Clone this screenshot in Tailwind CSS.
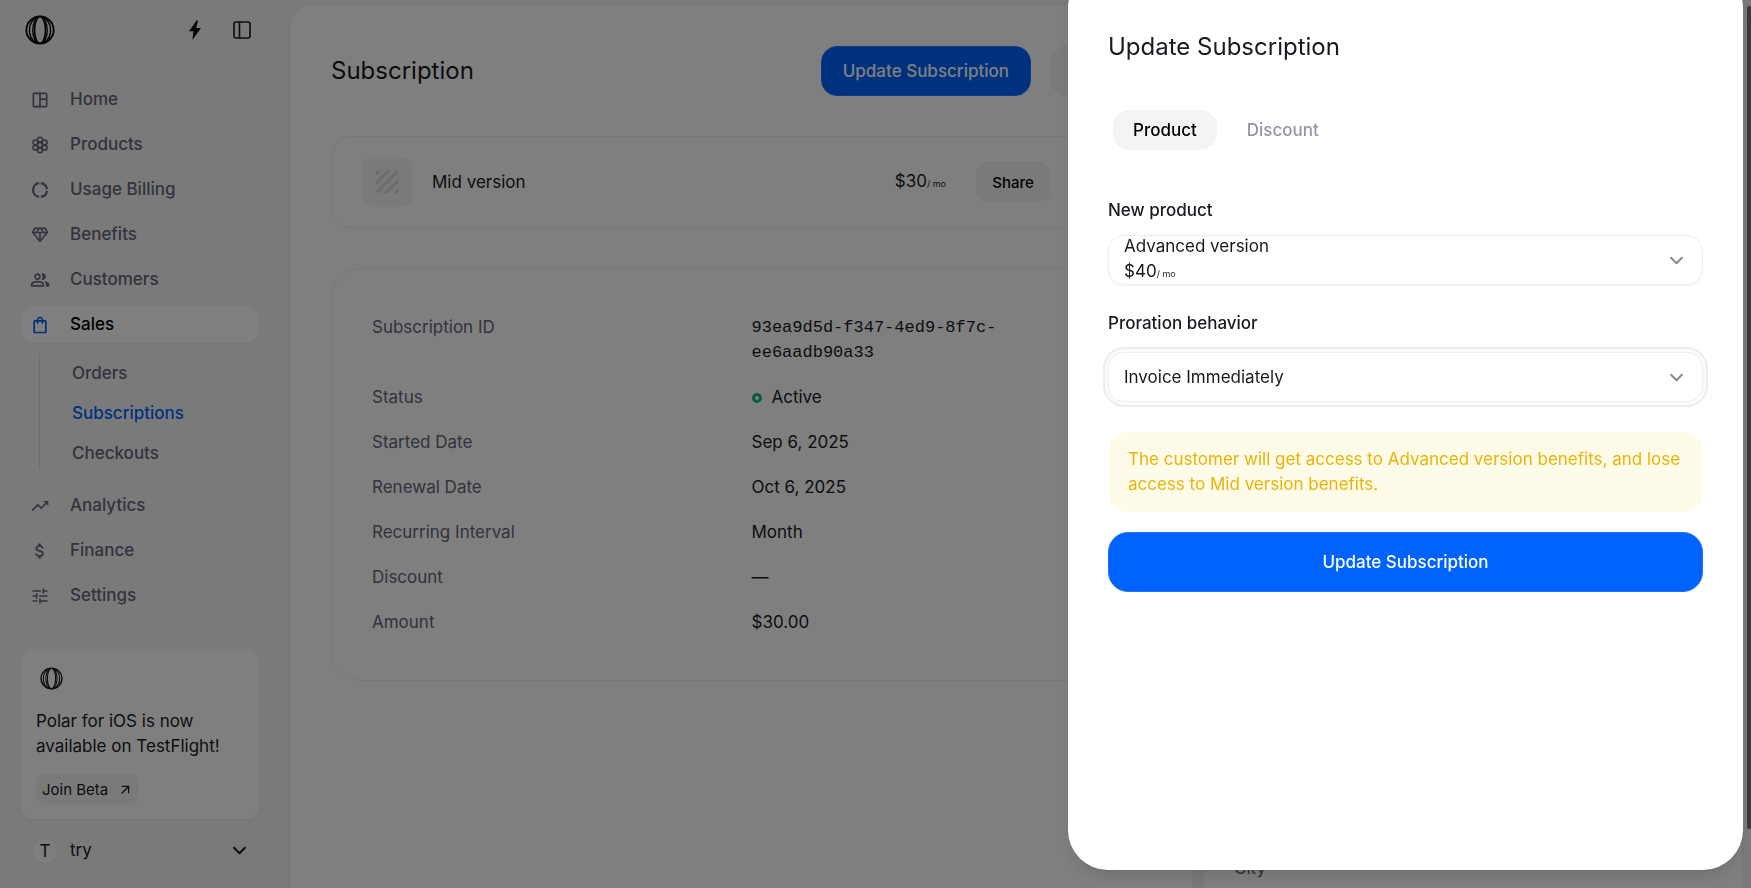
<!DOCTYPE html>
<html lang="en">
<head>
<meta charset="utf-8">
<meta name="viewport" content="width=device-width, initial-scale=1">
<title>Subscription</title>
<script src="https://cdn.jsdelivr.net/npm/@tailwindcss/browser@4"></script>
</head>
<body class="flex h-screen overflow-hidden bg-[#f5f5f5] font-['Inter',sans-serif] text-[17px] leading-[25px] text-[#181a1f]">
<svg class="hidden" aria-hidden="true">
  <symbol id="logo" viewBox="0 0 30 30">
    <g fill="none" stroke="currentColor">
      <circle cx="15" cy="15" r="13.6" stroke-width="1.8"/>
      <ellipse cx="15" cy="15" rx="5.4" ry="13.4" stroke-width="1.5"/>
      <path d="M12.500 1.700C2 7 2 22 11 27.700M14 1.600C6 6 5.500 24 14 28.400M17.500 1.700C28 7 28 22 19 27.700M16 1.600C24 6 24.500 24 16 28.400" stroke-width="1.4"/>
    </g>
  </symbol>
  <symbol id="chevron" viewBox="0 0 12 12"><path d="M1 3.500 6 8.500 11 3.500" fill="none" stroke="currentColor" stroke-width="1.8" stroke-linecap="round" stroke-linejoin="round"/></symbol>
</svg>

<aside class="flex h-full w-[290px] shrink-0 flex-col pr-[31px] pb-4 pl-[21px]">
  <div class="flex h-[59px] items-center">
    <a href="#" aria-label="Polar" class="ml-[4px] block text-black"><svg class="size-[30px]"><use href="#logo"/></svg></a>
    <div class="mr-2 ml-auto flex items-center gap-7">
      <button type="button" aria-label="Quick actions" class="text-black"><svg class="size-5" viewBox="0 0 20 20" fill="currentColor"><path d="M11.800 .2 4 11.300h4.400L7.500 19.800 16 8h-4.800L13 .5z"/></svg></button>
      <button type="button" aria-label="Toggle sidebar"><svg class="size-[18px]" viewBox="0 0 18 18" fill="none" stroke="currentColor" stroke-width="1.6"><rect x="1" y="1" width="16" height="16" rx="2"/><path d="M6.500 1v16"/></svg></button>
    </div>
  </div>

  <nav class="mt-[22px] flex flex-col gap-2 font-medium text-[#64667a]">
    <a href="#" class="flex h-[37px] items-center gap-5 px-[9px]"><svg class="size-5" viewBox="0 0 24 24" fill="currentColor"><path d="M19 3H5c-1.1 0-2 .9-2 2v14c0 1.1.9 2 2 2h14c1.1 0 2-.9 2-2V5c0-1.1-.9-2-2-2zM5 19V5h6v14H5zm14 0h-6v-7h6v7zm0-9h-6V5h6v5z"/></svg>Home</a>
    <a href="#" class="flex h-[37px] items-center gap-5 px-[9px]"><svg class="size-5" viewBox="0 0 24 24" fill="none" stroke="currentColor" stroke-width="1.8"><circle cx="12" cy="12" r="2.900"/><circle cx="12" cy="5.600" r="2.900"/><circle cx="12" cy="18.400" r="2.900"/><circle cx="6.400" cy="8.800" r="2.900"/><circle cx="6.400" cy="15.200" r="2.900"/><circle cx="17.600" cy="8.800" r="2.900"/><circle cx="17.600" cy="15.200" r="2.900"/></svg>Products</a>
    <a href="#" class="flex h-[37px] items-center gap-5 px-[9px]"><svg class="size-5" viewBox="0 0 24 24" fill="none" stroke="currentColor" stroke-width="2.700"><path d="M11 3.700C6.700 4.200 3.700 7.800 3.700 12s3 7.800 7.300 8.300M13 3.700c4 .5 6.900 3.500 7.400 7.300M20.400 13c-.5 3.800-3.400 6.800-7.400 7.300"/></svg>Usage Billing</a>
    <a href="#" class="flex h-[37px] items-center gap-5 px-[9px]"><svg class="size-5" viewBox="0 0 24 24" fill="currentColor"><path d="M19 3H5L2 9l10 12L22 9l-3-6zM9.620 8l1.500-3h1.760l1.500 3H9.620zM11 10v6.680L5.440 10H11zm2 0h5.560L13 16.680V10zm6.260-2h-2.650l-1.500-3h2.650l1.500 3zM6.240 5h2.650l-1.500 3H4.740l1.500-3z"/></svg>Benefits</a>
    <a href="#" class="flex h-[37px] items-center gap-5 px-[9px]"><svg class="size-5" viewBox="0 0 24 24" fill="currentColor"><path d="M16.670 13.130C18.040 14.060 19 15.320 19 17v3h4v-3c0-2.180-3.570-3.470-6.330-3.870zM15 12c2.210 0 4-1.790 4-4s-1.790-4-4-4c-.47 0-.91.1-1.330.24C14.500 5.270 15 6.580 15 8s-.5 2.730-1.330 3.760c.42.14.86.24 1.330.24zM9 12c2.210 0 4-1.790 4-4s-1.790-4-4-4-4 1.790-4 4 1.790 4 4 4zm0-6c1.100 0 2 .9 2 2s-.9 2-2 2-2-.9-2-2 .9-2 2-2zM9 13c-2.670 0-8 1.340-8 4v3h16v-3c0-2.660-5.330-4-8-4zm6 5H3v-.99C3.200 16.290 6.300 15 9 15s5.800 1.290 6 2v1z"/></svg>Customers</a>
    <a href="#" class="flex h-[37px] items-center gap-5 rounded-xl bg-white px-[9px] text-black shadow-xs"><svg class="size-5 text-[#0062ff]" viewBox="0 0 24 24" fill="currentColor"><path d="M18 6h-2c0-2.210-1.790-4-4-4S8 3.790 8 6H6c-1.100 0-2 .9-2 2v12c0 1.100.9 2 2 2h12c1.100 0 2-.9 2-2V8c0-1.100-.9-2-2-2zm-6-2c1.100 0 2 .9 2 2h-4c0-1.100.9-2 2-2zm6 16H6V8h2v2c0 .55.45 1 1 1s1-.45 1-1V8h4v2c0 .55.45 1 1 1s1-.45 1-1V8h2v12z"/></svg>Sales</a>
    <div class="mt-[3px] mb-[5px] ml-[18px] flex flex-col gap-[15px] border-l border-[#dcdcde] pt-[7px] pb-[3px] pl-8">
      <a href="#">Orders</a>
      <a href="#" class="text-[#0062ff]">Subscriptions</a>
      <a href="#">Checkouts</a>
    </div>
    <a href="#" class="mt-[5px] flex h-[37px] items-center gap-5 px-[9px]"><svg class="size-5" viewBox="0 0 24 24" fill="currentColor"><path d="m16 6 2.290 2.290-4.880 4.880-4-4L2 16.590 3.410 18l6-6 4 4 6.300-6.290L22 12V6z"/></svg>Analytics</a>
    <a href="#" class="flex h-[37px] items-center gap-5 px-[9px]"><svg class="size-5" viewBox="0 0 24 24" fill="currentColor"><path d="M11.800 10.900c-2.270-.59-3-1.200-3-2.150 0-1.090 1.010-1.850 2.700-1.850 1.780 0 2.440.85 2.500 2.100h2.210c-.07-1.720-1.120-3.300-3.210-3.810V3h-3v2.160c-1.940.42-3.500 1.680-3.500 3.610 0 2.310 1.910 3.460 4.700 4.130 2.500.6 3 1.480 3 2.410 0 .69-.49 1.790-2.700 1.790-2.060 0-2.870-.92-2.980-2.100h-2.200c.12 2.190 1.760 3.420 3.680 3.830V21h3v-2.150c1.950-.37 3.500-1.500 3.500-3.550 0-2.840-2.430-3.810-4.700-4.400z"/></svg>Finance</a>
    <a href="#" class="flex h-[37px] items-center gap-5 px-[9px]"><svg class="size-5" viewBox="0 0 24 24" fill="currentColor"><path d="M3 17v2h6v-2H3zM3 5v2h10V5H3zm10 16v-2h8v-2h-8v-2h-2v6h2zM7 9v2H3v2h4v2h2V9H7zm14 4v-2H11v2h10zm-6-4h2V7h4V5h-4V3h-2v6z"/></svg>Settings</a>
  </nav>

  <section class="mt-auto flex flex-col items-start rounded-xl bg-white px-[15px] pt-[18px] pb-[15px] shadow-xs">
    <svg class="ml-[4px] size-[23px]"><use href="#logo"/></svg>
    <p class="mt-[19px]">Polar for iOS is now<br>available on TestFlight!</p>
    <a href="#" class="mt-[15px] flex h-[30px] items-center gap-[10px] rounded-lg bg-[#f5f5f5] px-[6px] text-[15px]">Join Beta<svg class="size-[15px]" viewBox="0 0 24 24" fill="currentColor"><path d="M6 6v2h8.590L5 17.590 6.410 19 16 9.410V18h2V6z"/></svg></a>
  </section>
  <button type="button" class="mt-[10px] flex h-[43px] items-center px-[10px]">
    <span class="grid size-7 place-items-center rounded-full border-2 border-[#f0f0f1] bg-[#fbfcfc]">T</span>
    <span class="ml-[11px]">try</span>
    <svg class="mr-[3px] ml-auto size-[13px]"><use href="#chevron"/></svg>
  </button>
</aside>

<div class="flex h-full min-w-0 flex-1 gap-[10px] overflow-hidden pt-[5px] pr-2">
  <main class="min-w-0 flex-1 self-stretch rounded-t-[20px] border border-b-0 border-[#f1f1f2] bg-white px-10 pt-10">
    <header class="flex items-center">
      <h1 class="text-[24px] leading-8">Subscription</h1>
      <button type="button" class="ml-auto h-[50px] rounded-[16px] border border-[#1f74ff] bg-[#0062ff] px-[21px] font-medium text-white">Update Subscription</button>
      <button type="button" aria-label="Cancel" class="ml-5 h-[50px] w-[101px] rounded-[16px] border border-[#eeeeef] bg-[#f5f5f5]"></button>
    </header>

    <section class="mt-10 flex h-[92px] items-center rounded-[20px] border border-[#ededef] px-[30px]">
      <span class="grid size-[50px] place-items-center rounded-[10px] bg-[#f5f5f5] text-[#d8d8dd]"><svg class="size-[30px]" viewBox="0 0 24 24" fill="currentColor" stroke="currentColor" stroke-width=".3"><path d="M19.510 3.080 3.080 19.510c.09.34.27.65.51.9.25.24.56.42.9.51L20.930 4.490c-.19-.69-.73-1.230-1.420-1.410zM11.880 3 3 11.880v2.830L14.710 3h-2.830zM5 3c-1.100 0-2 .9-2 2v2l4-4H5zm14 18c.55 0 1.050-.22 1.410-.59.37-.36.59-.86.59-1.410v-2l-4 4h2zm-9.710 0h2.830L21 12.120V9.290L9.290 21z"/></svg></span>
      <h2 class="ml-5">Mid version</h2>
      <p class="ml-auto">$30<span class="text-[9px]">/ mo</span></p>
      <button type="button" class="mr-[71px] ml-[30px] h-10 w-[74px] rounded-xl border border-[#eeeeef] bg-[#f5f5f5] text-[15px] font-medium text-black">Share</button>
    </section>

    <dl class="mt-10 grid grid-cols-2 gap-5 rounded-[30px] border border-[#ededef] px-10 pt-[46px] pb-[45px]">
      <dt class="text-[#64667a]">Subscription ID</dt>
      <dd class="font-['Liberation_Mono',monospace]">93ea9d5d-f347-4ed9-8f7c-ee6aadb90a33</dd>
      <dt class="text-[#64667a]">Status</dt>
      <dd class="flex items-center gap-[10px]"><span class="size-[10px] rounded-full border-[3px] border-[#10b981]"></span>Active</dd>
      <dt class="text-[#64667a]">Started Date</dt><dd>Sep 6, 2025</dd>
      <dt class="text-[#64667a]">Renewal Date</dt><dd>Oct 6, 2025</dd>
      <dt class="text-[#64667a]">Recurring Interval</dt><dd>Month</dd>
      <dt class="text-[#64667a]">Discount</dt><dd>—</dd>
      <dt class="text-[#64667a]">Amount</dt><dd>$30.00</dd>
    </dl>
  </main>
  <section class="flex w-[540px] shrink-0 flex-col justify-end self-stretch rounded-t-[20px] border border-b-0 border-[#f1f1f2] bg-white px-[30px] pb-[7px]">
    <p class="text-[#64667a]">City</p>
  </section>
</div>

<div class="fixed inset-0 bg-black/50"></div>
<div class="fixed top-[6px] right-0 bottom-[59px] w-1 rounded-sm bg-[#3a3a3a]"></div>

<div role="dialog" aria-modal="true" aria-labelledby="dialog-title" class="fixed -top-8 right-2 bottom-[18px] flex w-[675px] max-w-full flex-col rounded-[40px] bg-white px-10 pt-[63px] shadow-lg">
  <h2 id="dialog-title" class="text-[24px] leading-8">Update Subscription</h2>
  <div role="tablist" class="mt-[47px] flex gap-[10px] px-[5px] font-medium">
    <button type="button" role="tab" aria-selected="true" class="h-10 rounded-[16px] bg-[#f4f4f7] px-5 text-black">Product</button>
    <button type="button" role="tab" aria-selected="false" class="h-10 rounded-[16px] px-5 text-[#9496a8]">Discount</button>
  </div>
  <form class="mt-12 flex flex-col">
    <label for="product" id="product-label" class="font-medium">New product</label>
    <button type="button" id="product" role="combobox" aria-expanded="false" aria-labelledby="product-label" class="mt-3 flex h-[50px] items-center justify-between rounded-[16px] border border-[#ecedee] px-[15px] text-left shadow-xs">
      <span class="flex flex-col"><span>Advanced version</span><span>$40<span class="text-[9px]">/ mo</span></span></span>
      <svg class="mr-1 size-[13px] text-[#888]"><use href="#chevron"/></svg>
    </button>
    <label for="proration" class="mt-[26px] font-medium">Proration behavior</label>
    <div class="mt-4 grid items-center">
      <select id="proration" class="col-start-1 row-start-1 h-[50px] w-full appearance-none rounded-[16px] border border-[#eceeef] bg-white px-[15px] shadow-[0_0_0_3px_#f9fafa,0_0_0_5px_#ecedef] outline-none"><option>Invoice Immediately</option></select>
      <svg class="pointer-events-none col-start-1 row-start-1 mr-5 size-[13px] justify-self-end text-[#888]"><use href="#chevron"/></svg>
    </div>
    <p class="mt-[30px] rounded-[20px] bg-[#fefbe8] px-5 py-[15px] text-[#eab308]">The customer will get access to Advanced version benefits, and lose access to Mid version benefits.</p>
    <button type="submit" class="mt-5 h-[60px] rounded-[20px] border border-[#1f74ff] bg-[#0062ff] font-medium text-white">Update Subscription</button>
  </form>
</div>
</body>
</html>
